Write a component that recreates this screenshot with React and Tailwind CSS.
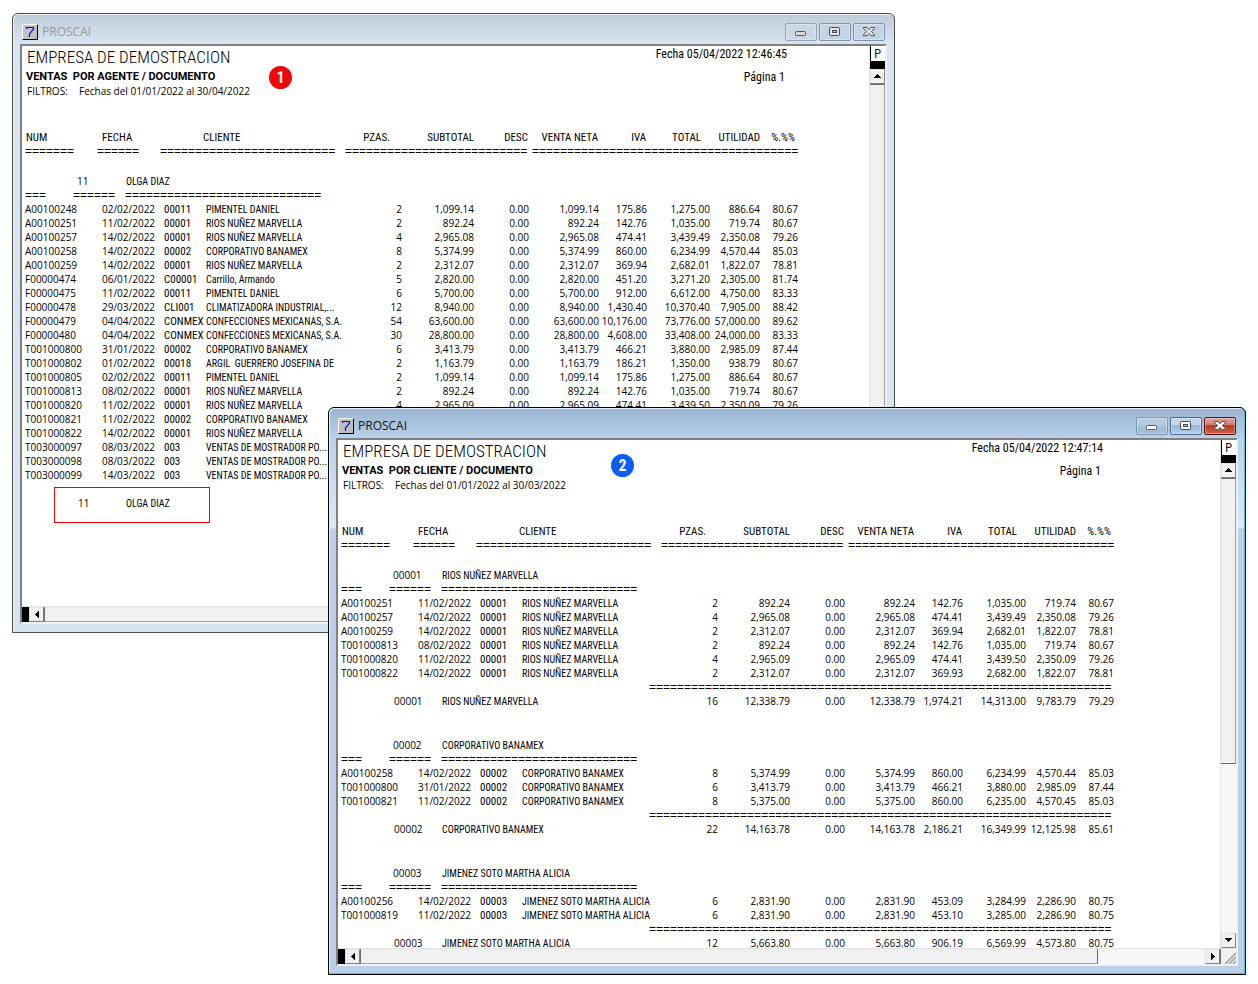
import React from 'react';

const COLUMN_WIDTHS = [
  'w-[77px]', // num
  'w-[62px]', // fecha
  'w-[42px]', // clave
  'w-[141px]', // cliente
  'w-[56px]', // pzas
  'w-[72px]', // subtotal
  'w-[55px]', // desc
  'w-[70px]', // venta neta
  'w-[48px]', // iva
  'w-[63px]', // total
  'w-[50px]', // utilidad
  'w-[38px]', // porcentaje
];

const agentRows = [
  ['A00100248', '02/02/2022', '00011', 'PIMENTEL DANIEL', '2', '1,099.14', '0.00', '1,099.14', '175.86', '1,275.00', '886.64', '80.67'],
  ['A00100251', '11/02/2022', '00001', 'RIOS NUÑEZ MARVELLA', '2', '892.24', '0.00', '892.24', '142.76', '1,035.00', '719.74', '80.67'],
  ['A00100257', '14/02/2022', '00001', 'RIOS NUÑEZ MARVELLA', '4', '2,965.08', '0.00', '2,965.08', '474.41', '3,439.49', '2,350.08', '79.26'],
  ['A00100258', '14/02/2022', '00002', 'CORPORATIVO BANAMEX', '8', '5,374.99', '0.00', '5,374.99', '860.00', '6,234.99', '4,570.44', '85.03'],
  ['A00100259', '14/02/2022', '00001', 'RIOS NUÑEZ MARVELLA', '2', '2,312.07', '0.00', '2,312.07', '369.94', '2,682.01', '1,822.07', '78.81'],
  ['F00000474', '06/01/2022', 'C00001', 'Carrillo, Armando', '5', '2,820.00', '0.00', '2,820.00', '451.20', '3,271.20', '2,305.00', '81.74'],
  ['F00000475', '11/02/2022', '00011', 'PIMENTEL DANIEL', '6', '5,700.00', '0.00', '5,700.00', '912.00', '6,612.00', '4,750.00', '83.33'],
  ['F00000478', '29/03/2022', 'CLI001', 'CLIMATIZADORA INDUSTRIAL,...', '12', '8,940.00', '0.00', '8,940.00', '1,430.40', '10,370.40', '7,905.00', '88.42'],
  ['F00000479', '04/04/2022', 'CONMEX', 'CONFECCIONES MEXICANAS, S.A.', '54', '63,600.00', '0.00', '63,600.00', '10,176.00', '73,776.00', '57,000.00', '89.62'],
  ['F00000480', '04/04/2022', 'CONMEX', 'CONFECCIONES MEXICANAS, S.A.', '30', '28,800.00', '0.00', '28,800.00', '4,608.00', '33,408.00', '24,000.00', '83.33'],
  ['T001000800', '31/01/2022', '00002', 'CORPORATIVO BANAMEX', '6', '3,413.79', '0.00', '3,413.79', '466.21', '3,880.00', '2,985.09', '87.44'],
  ['T001000802', '01/02/2022', '00018', 'ARGIL  GUERRERO JOSEFINA DE', '2', '1,163.79', '0.00', '1,163.79', '186.21', '1,350.00', '938.79', '80.67'],
  ['T001000805', '02/02/2022', '00011', 'PIMENTEL DANIEL', '2', '1,099.14', '0.00', '1,099.14', '175.86', '1,275.00', '886.64', '80.67'],
  ['T001000813', '08/02/2022', '00001', 'RIOS NUÑEZ MARVELLA', '2', '892.24', '0.00', '892.24', '142.76', '1,035.00', '719.74', '80.67'],
  ['T001000820', '11/02/2022', '00001', 'RIOS NUÑEZ MARVELLA', '4', '2,965.09', '0.00', '2,965.09', '474.41', '3,439.50', '2,350.09', '79.26'],
  ['T001000821', '11/02/2022', '00002', 'CORPORATIVO BANAMEX'],
  ['T001000822', '14/02/2022', '00001', 'RIOS NUÑEZ MARVELLA'],
  ['T003000097', '08/03/2022', '003', 'VENTAS DE MOSTRADOR PO...'],
  ['T003000098', '08/03/2022', '003', 'VENTAS DE MOSTRADOR PO...'],
  ['T003000099', '14/03/2022', '003', 'VENTAS DE MOSTRADOR PO...'],
];

const agentGroups = [{ code: '11', name: 'OLGA DIAZ', rows: agentRows }];

const clientGroups = [
  {
    code: '00001',
    name: 'RIOS NUÑEZ MARVELLA',
    rows: [
      ['A00100251', '11/02/2022', '00001', 'RIOS NUÑEZ MARVELLA', '2', '892.24', '0.00', '892.24', '142.76', '1,035.00', '719.74', '80.67'],
      ['A00100257', '14/02/2022', '00001', 'RIOS NUÑEZ MARVELLA', '4', '2,965.08', '0.00', '2,965.08', '474.41', '3,439.49', '2,350.08', '79.26'],
      ['A00100259', '14/02/2022', '00001', 'RIOS NUÑEZ MARVELLA', '2', '2,312.07', '0.00', '2,312.07', '369.94', '2,682.01', '1,822.07', '78.81'],
      ['T001000813', '08/02/2022', '00001', 'RIOS NUÑEZ MARVELLA', '2', '892.24', '0.00', '892.24', '142.76', '1,035.00', '719.74', '80.67'],
      ['T001000820', '11/02/2022', '00001', 'RIOS NUÑEZ MARVELLA', '4', '2,965.09', '0.00', '2,965.09', '474.41', '3,439.50', '2,350.09', '79.26'],
      ['T001000822', '14/02/2022', '00001', 'RIOS NUÑEZ MARVELLA', '2', '2,312.07', '0.00', '2,312.07', '369.93', '2,682.00', '1,822.07', '78.81'],
    ],
    totals: ['16', '12,338.79', '0.00', '12,338.79', '1,974.21', '14,313.00', '9,783.79', '79.29'],
  },
  {
    code: '00002',
    name: 'CORPORATIVO BANAMEX',
    rows: [
      ['A00100258', '14/02/2022', '00002', 'CORPORATIVO BANAMEX', '8', '5,374.99', '0.00', '5,374.99', '860.00', '6,234.99', '4,570.44', '85.03'],
      ['T001000800', '31/01/2022', '00002', 'CORPORATIVO BANAMEX', '6', '3,413.79', '0.00', '3,413.79', '466.21', '3,880.00', '2,985.09', '87.44'],
      ['T001000821', '11/02/2022', '00002', 'CORPORATIVO BANAMEX', '8', '5,375.00', '0.00', '5,375.00', '860.00', '6,235.00', '4,570.45', '85.03'],
    ],
    totals: ['22', '14,163.78', '0.00', '14,163.78', '2,186.21', '16,349.99', '12,125.98', '85.61'],
  },
  {
    code: '00003',
    name: 'JIMENEZ SOTO MARTHA ALICIA',
    rows: [
      ['A00100256', '14/02/2022', '00003', 'JIMENEZ SOTO MARTHA ALICIA', '6', '2,831.90', '0.00', '2,831.90', '453.09', '3,284.99', '2,286.90', '80.75'],
      ['T001000819', '11/02/2022', '00003', 'JIMENEZ SOTO MARTHA ALICIA', '6', '2,831.90', '0.00', '2,831.90', '453.10', '3,285.00', '2,286.90', '80.75'],
    ],
    totals: ['12', '5,663.80', '0.00', '5,663.80', '906.19', '6,569.99', '4,573.80', '80.75'],
  },
];

const Spacer = ({ className }) => (
  <tr className={className}>
    <td colSpan={12} />
  </tr>
);

// Línea de signos "=" que separa las secciones del reporte
const Rule = ({ children }) => (
  <tr className="h-[14px]">
    <td colSpan={12}>
      <div className="flex h-[14px] font-['Liberation_Sans',sans-serif] text-[12px] leading-[14px]">{children}</div>
    </td>
  </tr>
);

const Equals = ({ count, className }) => (
  <span aria-hidden="true" className={`shrink-0 ${className}`}>
    {'='.repeat(count)}
  </span>
);

const GroupLabel = ({ code, name, indent }) => (
  <div className="flex text-[10px]">
    <span className={`w-[101px] font-['Open_Sans',sans-serif] ${indent}`}>{code}</span>
    <span className="pt-0.5 leading-[12px]">{name}</span>
  </div>
);

const cellClass = (i) => {
  if (i === 3) return 'pt-0.5 text-left text-[10px] leading-[12px]';
  if (i === 2) return 'pt-0.5 text-left leading-[12px]';
  if (i < 2) return "text-left text-[10px] font-['Open_Sans',sans-serif]";
  return "text-right text-[10px] pr-px font-['Open_Sans',sans-serif]";
};

const Group = ({ group }) => (
  <>
    <tr className="h-[14px]">
      <td colSpan={12}>
        <GroupLabel code={group.code} name={group.name} indent="pl-[52px]" />
      </td>
    </tr>
    <Rule>
      <Equals count={3} className="w-12" />
      <Equals count={6} className="w-[52px]" />
      <Equals count={28} className="w-[196px]" />
    </Rule>
    {group.rows.map((row) => (
      <tr key={row[0]} className="h-[14px]">
        {row.map((value, i) => (
          <td key={i} className={cellClass(i)}>
            {value}
          </td>
        ))}
      </tr>
    ))}
    {group.totals ? (
      <Rule>
        <Equals count={66} className="ml-[308px]" />
      </Rule>
    ) : (
      <Spacer className="h-[14px]" />
    )}
    <tr className="h-[14px]">
      <td colSpan={4}>
        <GroupLabel code={group.code} name={group.name} indent="pl-[53px]" />
      </td>
      {(group.totals || []).map((value, i) => (
        <td key={i} className={cellClass(i + 4)}>
          {value}
        </td>
      ))}
    </tr>
    {group.totals && <Spacer className="h-[30px]" />}
  </>
);

const Report = ({ title, filter, date, groups }) => (
  <div className="w-[777px] whitespace-pre pl-[3px] font-['Roboto_Condensed','Open_Sans',sans-serif] text-[11px] leading-[14px] text-black">
    <header className="flex justify-between pr-3">
      <div>
        <h1 className="pl-0.5 text-[17px] font-light leading-[22px]">EMPRESA DE DEMOSTRACION</h1>
        <h2 className="mt-0.5 pl-px font-['Roboto',sans-serif] font-bold">{title}</h2>
        <p className="flex pl-0.5 font-['Open_Sans',sans-serif] text-[10px]">
          <span className="w-[52px]">FILTROS:</span>
          <span>{filter}</span>
        </p>
      </div>
      <div className="text-right text-[12px]">
        <p className="leading-4">{date}</p>
        <p className="mt-2 pr-0.5">Página 1</p>
      </div>
    </header>
    <table className="mt-8 w-full table-fixed border-collapse">
      <colgroup>
        {COLUMN_WIDTHS.map((w, i) => (
          <col key={i} className={w} />
        ))}
      </colgroup>
      <thead>
        <tr className="h-[14px] text-right leading-[12px] [&>th]:pt-0.5 [&>th]:font-normal">
          <th className="pl-px text-left">NUM</th>
          <th className="text-left">FECHA</th>
          <th colSpan={2} className="pl-[39px] text-left">CLIENTE</th>
          <th className="pr-[13px]">PZAS.</th>
          <th className="pr-px">SUBTOTAL</th>
          <th className="pr-0.5">DESC</th>
          <th className="pr-0.5">VENTA NETA</th>
          <th className="pr-0.5">IVA</th>
          <th className="pr-[10px]">TOTAL</th>
          <th className="pr-px">UTILIDAD</th>
          <th className="pr-1">%.%%</th>
        </tr>
        <Rule>
          <Equals count={7} className="w-[72px]" />
          <Equals count={6} className="w-[63px]" />
          <Equals count={25} className="w-[185px]" />
          <Equals count={26} className="w-[182px]" />
          <Equals count={38} className="ml-[5px]" />
        </Rule>
      </thead>
      <tbody>
        <Spacer className="h-4" />
        {groups.map((group) => (
          <Group key={group.code} group={group} />
        ))}
      </tbody>
    </table>
  </div>
);

const ARROWS = {
  up: 'M3 0h1v1h1v1h1v1h1v1H0V3h1V2h1V1h1z',
  down: 'M0 0h7v1H6v1H5v1H4v1H3V3H2V2H1V1H0z',
  left: 'M3 0h1v7H3V6H2V5H1V4H0V3h1V2h1V1h1z',
  right: 'M0 0h1v1h1v1h1v1h1v1H3v1H2v1H1v1H0z',
};

const ScrollButton = ({ dir, label }) => {
  const vertical = dir === 'up' || dir === 'down';
  return (
    <button
      aria-label={label}
      className="flex h-[15px] w-[15px] shrink-0 items-center justify-center border-b border-r border-[#808080] border-l border-t border-l-[#e3e3e3] border-t-[#e3e3e3] bg-[#f0f0f0] pb-px"
    >
      <svg width={vertical ? 7 : 4} height={vertical ? 4 : 7} shapeRendering="crispEdges">
        <path d={ARROWS[dir]} fill="#000" />
      </svg>
    </button>
  );
};

const TRACK = 'flex-1 bg-[repeating-conic-gradient(#f0f0f0_0_25%,#ffffff_0_50%)] bg-[length:2px_2px]';

const VerticalBar = ({ thumb }) => (
  <div className="flex w-4 shrink-0 flex-col border-l border-[#e3e3e3]">
    <button className="h-[15px] shrink-0 border-l border-black bg-white pr-px font-['Open_Sans',sans-serif] text-[12px] leading-[15px] text-black">
      P
    </button>
    <div className="h-2 shrink-0 bg-black" />
    <ScrollButton dir="up" label="Subir" />
    <div className={TRACK}>
      <div className={`border-b border-r border-t border-b-[#696969] border-r-[#a0a0a0] border-t-[#696969] bg-[#f0f0f0] ${thumb}`} />
    </div>
    <ScrollButton dir="down" label="Bajar" />
  </div>
);

const HorizontalBar = ({ thumb }) => (
  <div className="flex h-4 shrink-0 border-t border-[#e3e3e3]">
    <div className="w-[7px] bg-black" />
    <ScrollButton dir="left" label="Izquierda" />
    <div className={TRACK}>
      <div className={`h-[15px] border-b border-l border-r border-b-[#a0a0a0] border-l-[#696969] border-r-[#696969] bg-[#f0f0f0] ${thumb}`} />
    </div>
    <ScrollButton dir="right" label="Derecha" />
    <svg className="w-4 border-l border-[#696969] bg-[#f0f0f0]" height="15" viewBox="0 0 15 15">
      <path d="M4 15 15 4M8 15l7-7M12 15l3-3" stroke="#a0a0a0" strokeWidth="1.6" />
    </svg>
  </div>
);

const CaptionButton = ({ label, className, children }) => (
  <button
    aria-label={label}
    className={`flex h-[18px] w-8 items-center justify-center rounded-[2px] border shadow-[inset_0_0_0_1px_rgba(255,255,255,0.35)] ${className}`}
  >
    {children}
  </button>
);

const Window = ({ active, className, children, vThumb, hThumb }) => (
  <section
    className={`absolute flex flex-col rounded-t-[6px] border px-[7px] pb-2 ${
      active
        ? 'border-black bg-[linear-gradient(#99b4d1,#b9d1ea_30px,#dce9f7_120px,#b9cfea_121px)] shadow-[inset_-1px_-1px_0_#35c8e0,inset_1px_1px_0_#e4eef8]'
        : 'border-[#4c4c4c] bg-[linear-gradient(#bfcddb,#d7e4f2_30px)] shadow-[inset_1px_1px_0_#e9f0f7]'
    } ${className}`}
  >
    <div className="flex h-[30px] shrink-0 items-center pl-0.5 pr-0.5 pt-1.5">
      <span className="flex h-4 w-4 items-center justify-center border border-b-black border-l-white border-r-black border-t-white bg-[#c0c0c0]">
        <svg width="10" height="12" fill="none" stroke="#0000ff">
          <path d="M1.500 3V1.500h7V3L4.500 8v3" strokeWidth="1.2" />
        </svg>
      </span>
      <span
        className={`flex-1 pl-1 font-['Open_Sans',sans-serif] text-[12px] leading-4 ${
          active ? 'text-[#111]' : 'text-[#999]'
        }`}
      >
        PROSCAI
      </span>
      <div className="flex gap-0.5">
        <CaptionButton
          label="Minimizar"
          className={active ? 'border-[#7d98b8] bg-[linear-gradient(#b5cbe2_50%,#a3bcd8_50%)]' : 'border-[#94a4b8] bg-[#c9d7e6]'}
        >
          <svg width="12" height="12" className="pt-px">
            <rect x="0.5" y="4.5" width="10" height="4" rx="1" fill={active ? '#fff' : '#d8d8d8'} stroke="#55585e" />
          </svg>
        </CaptionButton>
        <CaptionButton
          label="Maximizar"
          className={active ? 'border-[#4d6a90] bg-[linear-gradient(#c2d5ea_45%,#9ab4d2_45%,#b4cfe8)]' : 'border-[#8093b0] bg-[#c5d4e5]'}
        >
          <svg width="12" height="10">
            <rect x="0.5" y="0.5" width="10" height="8" rx="1" fill={active ? '#fff' : '#e6e6e6'} stroke="#454a58" />
            <rect x="3.5" y="3.5" width="4" height="2" fill="#a9c0da" stroke="#454a58" />
          </svg>
        </CaptionButton>
        <CaptionButton
          label="Cerrar"
          className={active ? 'border-[#4c1518] bg-[linear-gradient(#e3a196_0%,#d37a6b_45%,#b9391f_45%,#d0604a)]' : 'border-[#8093b0] bg-[#c5d4e5]'}
        >
          <svg width="12" height="10">
            <path
              d="M.5.5h3.500L6 2.700 8 .5h3.500v1L8.300 4.500l3.200 3.200v1H8L6 6.500l-2 2.200H.5v-1l3.200-3.200L.5 1.500z"
              fill={active ? '#fff' : '#e6e6e6'}
              stroke="#454a58"
            />
          </svg>
        </CaptionButton>
      </div>
    </div>
    <div className="flex min-h-0 flex-1 flex-col border-2 border-b-[#f0f0f0] border-l-[#808080] border-r-[#f0f0f0] border-t-[#808080] bg-white">
      <div className="flex min-h-0 flex-1">
        <div className="relative min-w-0 flex-1 overflow-hidden">{children}</div>
        <VerticalBar thumb={vThumb} />
      </div>
      <HorizontalBar thumb={hThumb} />
    </div>
  </section>
);

const Badge = ({ className, children }) => (
  <span
    className={`absolute flex h-[23px] w-[23px] items-center justify-center rounded-full font-['Roboto_Condensed','Open_Sans',sans-serif] text-[16px] font-bold text-white ${className}`}
  >
    {children}
  </span>
);

const App = () => (
  <main className="relative min-h-screen overflow-hidden bg-white">
    <Window className="left-3 top-[13px] h-[620px] w-[883px]" vThumb="h-full" hThumb="w-full">
      <Report
        title="VENTAS  POR AGENTE / DOCUMENTO"
        filter="Fechas del 01/01/2022 al 30/04/2022"
        date="Fecha 05/04/2022 12:46:45"
        groups={agentGroups}
      />
      <Badge className="left-[247px] top-5 bg-[#fb0007]">1</Badge>
      {/* Recuadro sobre el total del agente */}
      <div className="absolute left-8 top-[441px] h-9 w-[156px] border border-[#f00000]" />
    </Window>
    <Window active className="left-[328px] top-[407px] h-[568px] w-[918px]" vThumb="h-[286px]" hThumb="w-[738px]">
      <Report
        title="VENTAS  POR CLIENTE / DOCUMENTO"
        filter="Fechas del 01/01/2022 al 30/03/2022"
        date="Fecha 05/04/2022 12:47:14"
        groups={clientGroups}
      />
      <Badge className="left-[273px] top-[14px] bg-[#0a5cff]">2</Badge>
    </Window>
  </main>
);

export default App;
